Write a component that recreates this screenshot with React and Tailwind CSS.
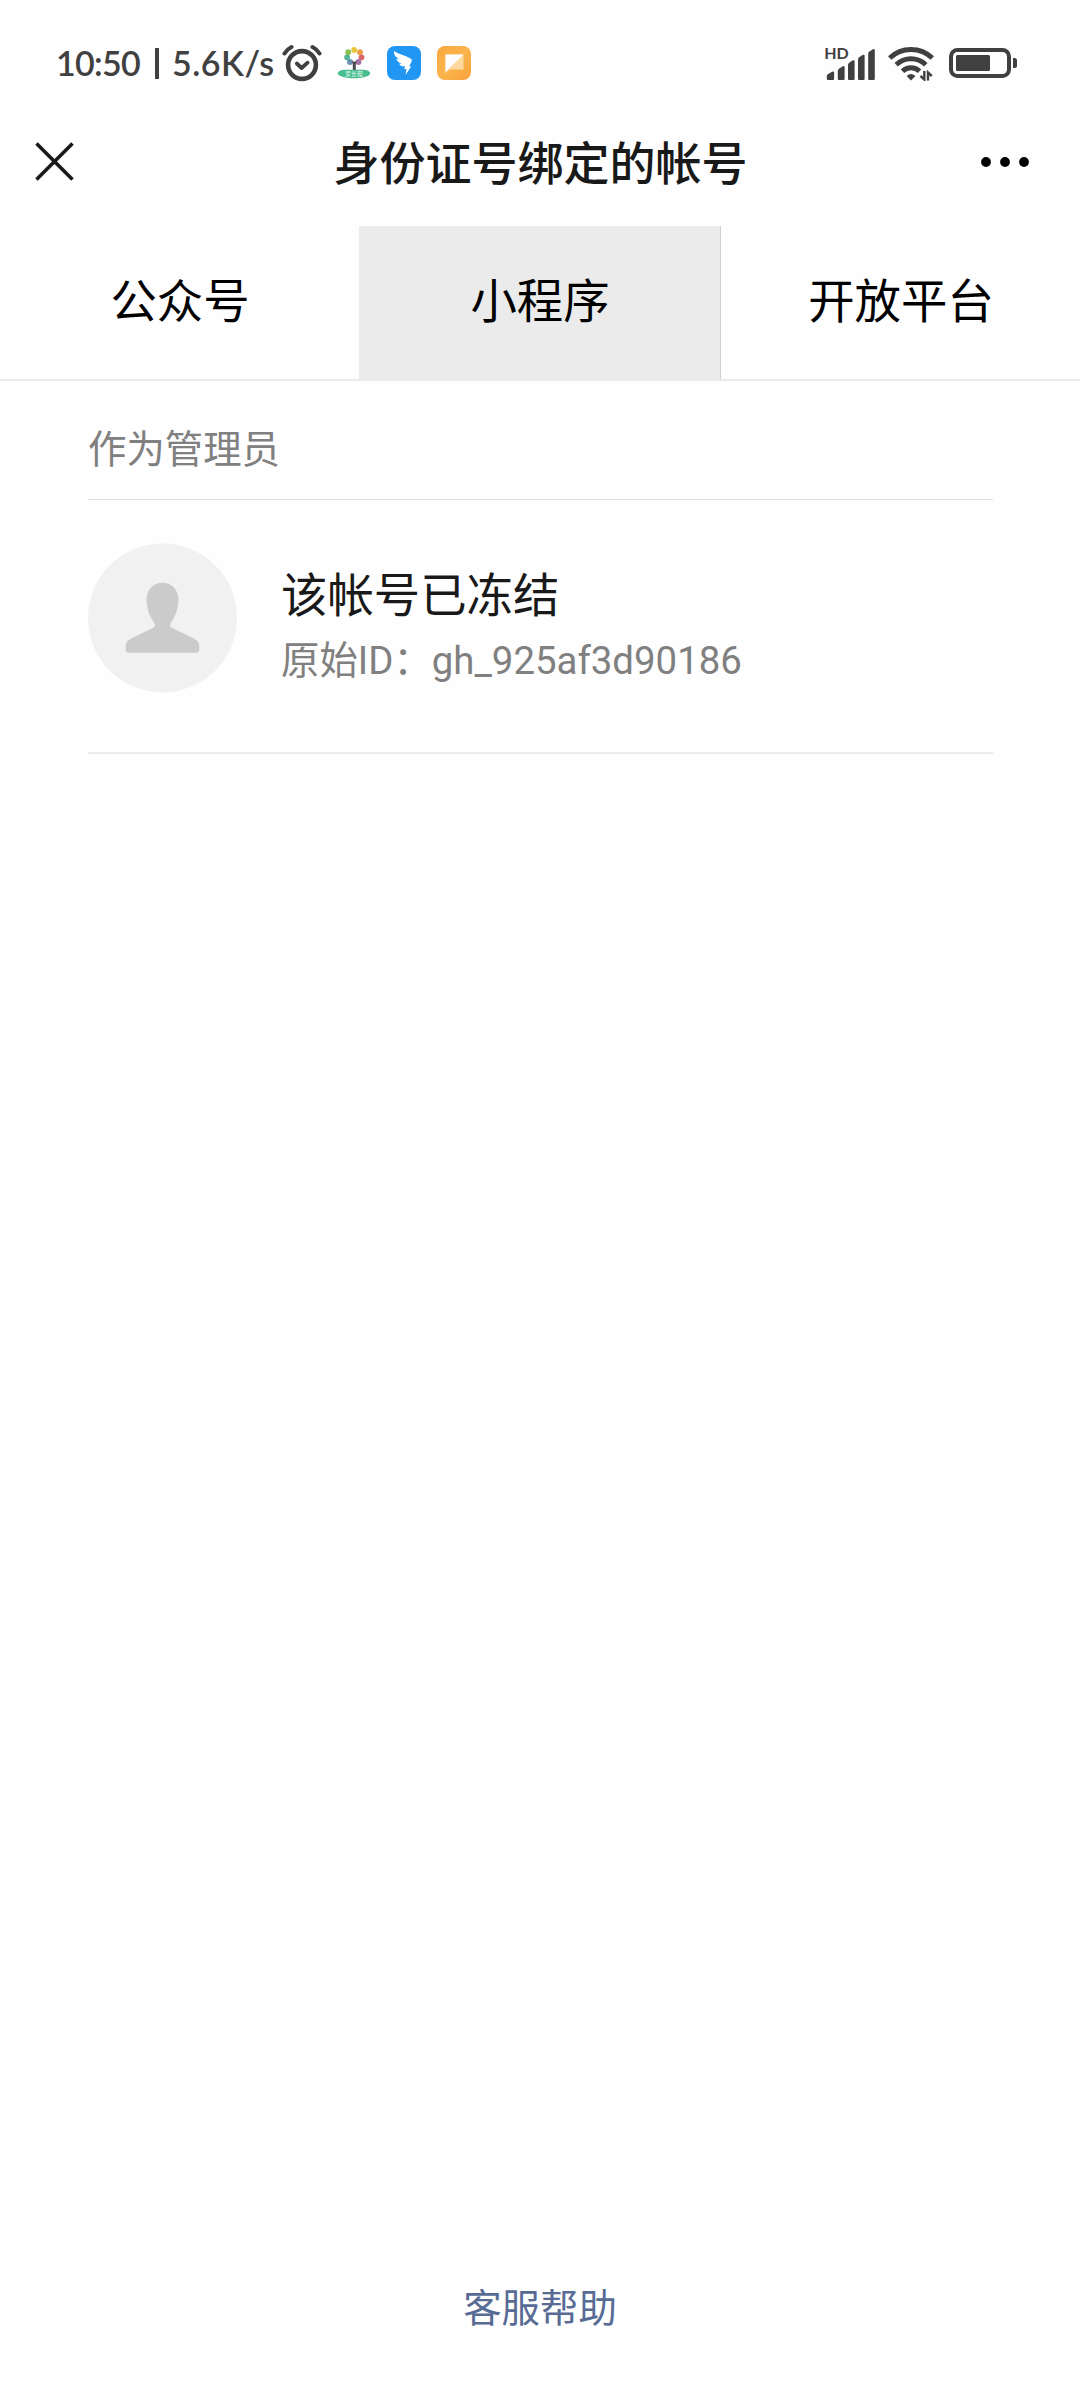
const tabs = [
  { key: 'official', label: '公众号' },
  { key: 'mini', label: '小程序' },
  { key: 'open', label: '开放平台' },
]

const accounts = [{ id: 'gh_925af3d90186', name: '该帐号已冻结' }]

function AlarmIcon() {
  return (
    <svg width="40" height="38" viewBox="0 0 40 38" fill="none" stroke="#404040" strokeLinecap="round" strokeLinejoin="round">
      <circle cx="20" cy="21" r="13.900" strokeWidth="4.600" />
      <path d="M14.800 19.500l4.800 4.500 6-5.300" strokeWidth="3.800" />
      <path d="M2.500 9.500C4 6.800 6.500 4.500 9.500 3M37.500 9.500C36 6.800 33.500 4.500 30.500 3" strokeWidth="4" />
    </svg>
  )
}

const petals = [
  ['#6a8fb5', 13, 16],
  ['#52b39a', 10.1, 11.300],
  ['#8cc152', 11.200, 6.200],
  ['#e8c53c', 17.200, 3.900],
  ['#eb9d48', 23, 6.200],
  ['#d9676a', 24.500, 11.300],
  ['#a273a8', 21.500, 16],
]

function TreeAppIcon() {
  return (
    <svg width="34" height="34" viewBox="0 0 34 34">
      {petals.map(([color, x, y]) => <circle key={color} cx={x} cy={y} r="2.900" fill={color} />)}
      <path d="M15.800 24v-6l-.8-3.500 2.300 1.500 2.300-1.500-.8 3.500v6z" fill="#4b4650" />
      <path d="M.7 27.300c.8-2.600 4-3.300 7.300-3.500h18c3.300.2 6.500.9 7.300 3.500-.8 2.600-3.800 3.200-7 4-5 1.300-13.600 1.300-18.600 0-3.200-.8-6.200-1.400-7-4z" fill="#45bd8e" />
      <text x="17" y="30.200" fontSize="6" fill="#e4f7ef" textAnchor="middle">家长帮</text>
    </svg>
  )
}

function WingAppIcon() {
  return (
    <svg width="34" height="34" viewBox="0 0 34 34">
      <rect width="34" height="34" rx="8" fill="#2196f3" />
      <path d="M7 5c5 3.500 11 4 16 7.200 1.800 1 2.200 2 1.600 3.400l-2.400 4.900h2l-5.700 8.500 1-6h-2.300l1-2.700c-3 .5-4.800-.3-6-2.500l2.800-.1c-2.700-.8-5-2.500-5.800-5l3.300.5C9.200 11.500 6.500 9 7 5z" fill="#fff" />
    </svg>
  )
}

function NoteAppIcon() {
  return (
    <svg width="34" height="34" viewBox="0 0 34 34">
      <defs>
        <linearGradient id="note" x1="0" y1="0" x2="1" y2="1">
          <stop offset="0" stopColor="#f9a640" />
          <stop offset=".5" stopColor="#fbb54c" />
          <stop offset="1" stopColor="#f9a13c" />
        </linearGradient>
      </defs>
      <rect width="34" height="34" rx="8" fill="url(#note)" />
      <path d="M8.500 8.500h18v15h-14l-4 3.500z" fill="#fdd9a0" />
      <path d="M8.500 8.500h18L8.500 26z" fill="#fff" />
    </svg>
  )
}

function SignalIcon() {
  return (
    <svg width="52" height="36" viewBox="0 0 52 36" fill="#404040" className="overflow-visible">
      <text x="-0.800" y="14" fontFamily="Lato, sans-serif" fontSize="16" fontWeight="700">HD</text>
      <path d="M1.800 31.500q0-1.500 1.300-2.400l4-2.300q2-.7 2 1V34q0 1-1 1H3q-1.200 0-1.200-1z" />
      <path d="M12.800 26q0-1.300 1.200-2.200l3.400-2.400q2.200-1 2.200.8V34q0 1-1 1h-4.800q-1 0-1-1z" />
      <path d="M23 20q0-1.300 1.200-2.200l3.200-2.300q2.200-1 2.200.8V34q0 1-1 1H24q-1 0-1-1z" />
      <path d="M33 14.500q0-1.300 1.200-2.200l3.200-2.300q2.200-1 2.200.8V34q0 1-1 1H34q-1 0-1-1z" />
      <path d="M43.200 8.800q0-1.300 1.200-2.200l3.100-2.200q2.300-1 2.300 1V34q0 1-1 1h-4.600q-1 0-1-1z" />
    </svg>
  )
}

function WifiIcon() {
  return (
    <svg width="46" height="36" viewBox="0 0 46 36" fill="none" stroke="#404040" strokeWidth="5">
      <path d="M1.700 13a31 31 0 0 1 42.600 0" />
      <path d="M8.200 19.700a21.500 21.500 0 0 1 29.600 0" />
      <path d="M14.500 26.200a12.400 12.400 0 0 1 17 0" />
      <path d="M18.600 31q4.400-4.200 8.800 0L23 35.500z" fill="#404040" stroke="none" />
      <path d="M36.300 26v8.500l-3.800-3.500M40 35.500v-8l3.800 3.500" strokeWidth="2.400" />
    </svg>
  )
}

function BatteryIcon() {
  return (
    <svg width="68" height="30" viewBox="0 0 68 30">
      <rect x="2" y="2" width="58" height="26" rx="6.500" fill="none" stroke="#404040" strokeWidth="4" />
      <rect x="7" y="7" width="34" height="16" rx="1.500" fill="#404040" />
      <path d="M64 10h1.500q2.500 0 2.500 2.500v5q0 2.500-2.500 2.500H64z" fill="#404040" />
    </svg>
  )
}

function StatusBar() {
  return (
    <div className="flex h-[126px] items-center pr-[63px] pl-[56px]">
      <div className="flex w-[226px] items-center font-['Lato'] text-[34px] leading-[40px] font-semibold whitespace-nowrap text-[#404040]">
        <span className="w-[99px] tracking-[-0.7px]">10:50</span>
        <span className="h-[31px] w-[4px] bg-[#404040]" />
        <span className="pl-[13px] tracking-[0.5px]">5.6K/s</span>
      </div>
      <AlarmIcon />
      <div className="ml-[15px] flex gap-4">
        <TreeAppIcon />
        <WingAppIcon />
        <NoteAppIcon />
      </div>
      <div className="ml-auto flex items-center">
        <SignalIcon />
        <div className="ml-[11px]"><WifiIcon /></div>
        <div className="ml-[15px]"><BatteryIcon /></div>
      </div>
    </div>
  )
}

function NavBar() {
  return (
    <header className="flex h-[100px] items-center justify-between px-[35px] pb-[29px]">
      <svg width="39" height="39" viewBox="0 0 39 39" stroke="#191919" strokeWidth="3.600">
        <path d="M1.500 1.500l36 36M37.500 1.500l-36 36" />
      </svg>
      <h1 className="ml-[27px] pt-[4px] text-[46px] leading-[60px] font-medium text-[#191919]">身份证号绑定的帐号</h1>
      <svg width="50" height="12" viewBox="0 0 50 12" className="mr-[15px]">
        <circle cx="6" cy="6" r="4.900" />
        <circle cx="25" cy="6" r="4.900" />
        <circle cx="44" cy="6" r="4.900" />
      </svg>
    </header>
  )
}

function Tabs({ active }) {
  return (
    <nav className="grid h-[155px] grid-cols-[359px_362px_359px] border-b-2 border-[#ebebeb]">
      {tabs.map(tab => (
        <div
          key={tab.key}
          className={`flex items-center justify-center pl-px text-[46.4px] text-black ${tab.key === active ? 'border-r border-[#d0d0d0] bg-[#ebebeb]' : ''}`}
        >
          {tab.label}
        </div>
      ))}
    </nav>
  )
}

function Avatar() {
  return (
    <svg width="149" height="150" viewBox="0 0 150 150" className="shrink-0">
      <circle cx="75" cy="75" r="75" fill="#f1f1f1" />
      <path d="M75 39.500c9.500 0 16 7 16 17 0 9-3 17-7.200 22.500-1.800 2.800-1.600 4.500 1 6l21.200 10.500c4 2 6 4 6 7.500v4c0 2-1 3-3 3H41c-2 0-3-1-3-3v-4c0-3.500 2-5.500 6-7.500L65.200 85c2.600-1.500 2.800-3.200 1-6C62 73.500 59 65.500 59 56.500c0-10 6.500-17 16-17z" fill="#cbcbcb" />
    </svg>
  )
}

export default function App() {
  return (
    <div className="flex h-[2400px] w-[1080px] flex-col bg-[#fefefe] font-['Roboto','Noto_Sans_CJK_SC',sans-serif]">
      <StatusBar />
      <NavBar />
      <Tabs active="mini" />
      <main className="flex-1 pr-[87px] pl-[88px]">
        <h2 className="h-[119px] border-b border-[#e2e2e2] pt-[40px] text-[38.4px] leading-[58px] text-[#808080]">作为管理员</h2>
        {accounts.map(account => (
          <section key={account.id} className="flex h-[254px] border-b-2 border-[#ebebeb] pt-[43px]">
            <Avatar />
            <div className="ml-[44px] pt-[21px]">
              <div className="text-[46.4px] leading-[65px] text-[#191919]">{account.name}</div>
              <div className="text-[38.4px] leading-[64px] text-[#808080]">原始ID：{account.id}</div>
            </div>
          </section>
        ))}
      </main>
      <footer className="flex h-[120px] justify-center text-[38.4px] leading-[58px] text-[#576b95]">客服帮助</footer>
    </div>
  )
}
